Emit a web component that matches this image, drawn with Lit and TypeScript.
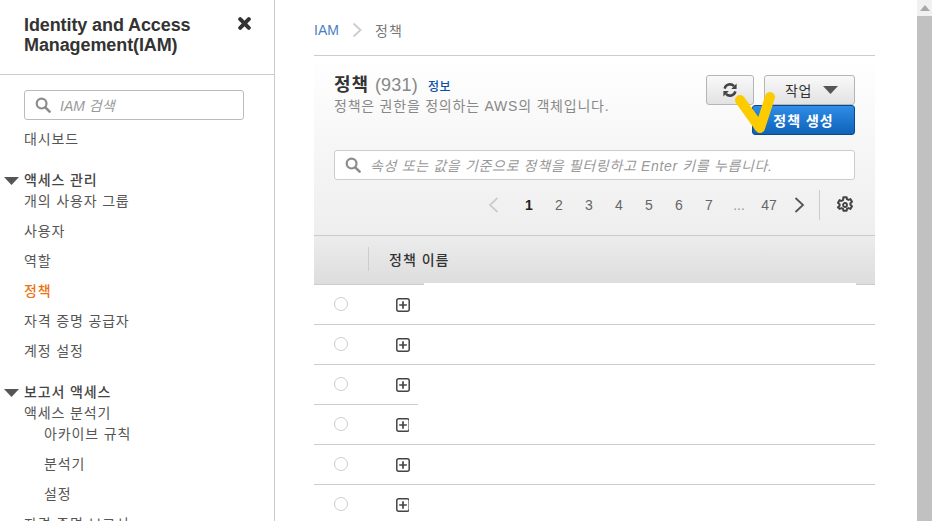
import { LitElement, html, css, svg } from "lit";
import { customElement } from "lit/decorators.js";

const searchIcon = svg`<svg class="mag" width="16" height="16" viewBox="0 0 16 16"><circle cx="6.6" cy="6.6" r="4.9" fill="none" stroke="#8c8c8c" stroke-width="2.2"/><path d="M10.3 10.3 14.6 14.6" stroke="#8c8c8c" stroke-width="2.6" stroke-linecap="round"/></svg>`;
const caret = svg`<svg class="caret" width="15" height="8" viewBox="0 0 15 8"><path d="M0 0H15L7.5 8Z" fill="#555"/></svg>`;
const plus = svg`<svg width="14" height="14" viewBox="0 0 14 14"><rect x=".8" y=".8" width="12.4" height="12.4" rx="2" fill="none" stroke="#444" stroke-width="1.5"/><path d="M3.2 7H10.8M7 3.2V10.8" stroke="#444" stroke-width="1.7"/></svg>`;

@customElement("app-root")
export class AppRoot extends LitElement {
  static styles = css`
    :host { display: block; width: 932px; height: 521px; overflow: hidden; position: relative; background: #fff;
      font-family: "Liberation Sans", "Noto Sans CJK KR", sans-serif; color: #444; font-size: 14px; }
    * { box-sizing: border-box; }
    .page { display: flex; height: 521px; }
    .side { width: 275px; flex: none; border-right: 1px solid #ccc; height: 521px; overflow: hidden; }
    .side-head { height: 75px; border-bottom: 1px solid #ccc; padding: 15px 24px 0; display: flex; justify-content: space-between; }
    .side-title { font-size: 18px; line-height: 20px; font-weight: 700; color: #333; letter-spacing: -0.1px; }
    .close { margin: 2px -1px 0 0; }
    .side-search { margin: 15px 30px 0 24px; height: 30px; border: 1px solid #bbb; border-radius: 3px; display: flex; align-items: center; padding-left: 10px; gap: 9px;
      font-style: italic; color: #999; font-size: 14px; }
    .mag { flex: none; }
    .nav { padding-left: 24px; margin-top: 4px; position: relative; letter-spacing: 0.85px; }
    .item { height: 30px; line-height: 30px; color: #555; white-space: nowrap; }
    .item.sub { padding-left: 20px; }
    .item.on { color: #ec7211; font-weight: 500; }
    .sec { height: 21px; line-height: 21px; margin-top: 16px; font-weight: 500; color: #444; position: relative; white-space: nowrap; }
    .sec .caret { position: absolute; left: -20px; top: 7px; }
    .tight { height: 21px; line-height: 21px; color: #555; white-space: nowrap; }
    .gap { height: 4px; }
    .subs { margin-top: -5px; }
    .main { width: 642px; flex: none; padding: 0 42px 0 39px; position: relative; }
    .crumb { height: 56px; border-bottom: 1px solid #ccc; display: flex; align-items: center; gap: 13px; padding-top: 5px; }
    .crumb .iam { color: #4a7fc1; }
    .crumb .cur { color: #777; letter-spacing: 1.2px; }
    .panel { background: linear-gradient(#fff, #eee); height: 180px; border-bottom: 1px solid #ccc; padding: 19px 20px 0; }
    .top { display: flex; justify-content: space-between; height: 60px; }
    .t1 { display: flex; align-items: baseline; height: 20px; line-height: 20px; }
    .t1 b { font-size: 18px; color: #333; font-weight: 700; letter-spacing: 0.9px; }
    .t1 .n { font-size: 18px; color: #888; margin-left: 6px; letter-spacing: 0.2px; }
    .t1 a { font-size: 12px; color: #0b4fa8; font-weight: 500; margin-left: 10px; letter-spacing: 0.6px; }
    .desc { color: #888; font-size: 14px; line-height: 20px; margin-top: 1px; letter-spacing: 0.77px; }
    .acts { width: 149px; display: flex; flex-wrap: wrap; justify-content: flex-end; column-gap: 10px; align-content: flex-start; }
    .btn { height: 30px; border: 1px solid #b5b5b5; border-radius: 3px; background: linear-gradient(#f9f9f9, #e2e2e2); display: flex; align-items: center; justify-content: center; color: #333; font-size: 14px; }
    .btn.ref { width: 48px; }
    .btn.act { width: 91px; gap: 11px; padding-left: 4px; letter-spacing: 0.7px; }
    .btn.act .caret { display: block; }
    .btn.new { width: 103px; background: linear-gradient(#2f8ce8, #0f62b8); border-color: #0a4a8c; color: #fff; font-weight: 700; letter-spacing: 1px; }
    .search { margin-top: 15px; height: 30px; background: #fff; border: 1px solid #ccc; border-radius: 3px; display: flex; align-items: center; padding-left: 10px; gap: 9px; font-style: italic; color: #999; letter-spacing: 0.66px; }
    .pager { display: flex; align-items: center; justify-content: flex-end; height: 30px; margin-top: 10px; color: #666; }
    .pn { width: 30px; text-align: center; font-size: 14px; }
    .pn.on { color: #222; font-weight: 700; }
    .pn.dots { color: #999; }
    .pdiv { width: 1px; height: 30px; background: #ccc; margin: 0 16px 0 14px; }
    .prev { margin-right: 15px; display: block; }
    .next { display: block; margin-left: 10px; }
    .gear { margin-right: 1px; display: block; }
    .thead { height: 49px; background: linear-gradient(#ececec, #ddd); border-bottom: 1px solid #ccc; display: flex; align-items: center; position: relative; padding-bottom: 2px; }
    .thead .bar { width: 1px; height: 24px; background: #ccc; margin-left: 54px; }
    .thead .nm { margin-left: 20px; color: #333; font-weight: 500; letter-spacing: 1px; }
    .mask { position: absolute; left: 110px; right: 19px; bottom: -1px; height: 2px; background: #fff; }
    .row { height: 40px; display: flex; align-items: center; border-bottom: 1px solid #ccc; padding-top: 1px; position: relative; }
    .row.short { border-bottom: none; padding-bottom: 1px; padding-top: 0; }
    .row.short::after { content: ""; position: absolute; left: 0; bottom: 0; width: 104px; height: 1px; background: #ccc; }
    .radio { width: 14px; height: 14px; border: 1px solid #ccc; border-radius: 50%; margin: -2px 0 0 20px; background: #fff; }
    .plus { margin-left: 48px; display: block; line-height: 0; }
    .plus.clip { clip-path: inset(0 1px 0 0); }
    .rows { height: 236px; overflow: hidden; }
    .scroll { width: 15px; flex: none; background: #f1f1f1; height: 521px; display: flex; flex-direction: column; }
    .up { height: 16px; display: flex; align-items: center; justify-content: center; }
    .thumb { flex: 1; background: #c1c1c1; }
    .mark { position: absolute; left: 730px; top: 85px; pointer-events: none; }
  `;

  private row(clip = false, short = false) {
    return html`<div class="row ${short ? "short" : ""}"><div class="radio"></div><span class="plus ${clip ? "clip" : ""}">${plus}</span></div>`;
  }

  render() {
    return html`
      <div class="page">
        <aside class="side">
          <div class="side-head">
            <div class="side-title">Identity and Access<br />Management(IAM)</div>
            <svg class="close" width="13" height="13" viewBox="0 0 13 13"><path d="M2.2 2.2 10.8 10.8M10.8 2.2 2.2 10.8" stroke="#333" stroke-width="4" stroke-linecap="round"/></svg>
          </div>
          <div class="side-search">${searchIcon}<span>IAM 검색</span></div>
          <div class="nav">
            <div class="item">대시보드</div>
            <div class="sec">${caret}액세스 관리</div>
            <div class="tight">개의 사용자 그룹</div>
            <div class="gap"></div>
            <div class="item">사용자</div>
            <div class="item">역할</div>
            <div class="item on">정책</div>
            <div class="item">자격 증명 공급자</div>
            <div class="item">계정 설정</div>
            <div class="sec">${caret}보고서 액세스</div>
            <div class="tight">액세스 분석기</div>
            <div class="subs">
              <div class="item sub">아카이브 규칙</div>
              <div class="item sub">분석기</div>
              <div class="item sub">설정</div>
            </div>
            <div class="item">자격 증명 보고서</div>
          </div>
        </aside>
        <main class="main">
          <div class="crumb">
            <span class="iam">IAM</span>
            <svg width="10" height="16" viewBox="0 0 10 16"><path d="M1.5 1.5 8.5 8 1.5 14.5" fill="none" stroke="#ccc" stroke-width="1.8"/></svg>
            <span class="cur">정책</span>
          </div>
          <section class="panel">
            <div class="top">
              <div>
                <div class="t1"><b>정책</b><span class="n">(931)</span><a>정보</a></div>
                <div class="desc">정책은 권한을 정의하는 AWS의 객체입니다.</div>
              </div>
              <div class="acts">
                <div class="btn ref">
                  <svg width="16" height="16" viewBox="0 0 16 16"><path d="M2.6 6.6A5.5 5.5 0 0 1 12 4.2M13.4 9.4A5.5 5.5 0 0 1 4 11.8" fill="none" stroke="#444" stroke-width="2.5"/><path d="M14.6 1.6V7H9.2ZM1.4 14.4V9H6.8Z" fill="#444"/></svg>
                </div>
                <div class="btn act"><span>작업</span>${caret}</div>
                <div class="btn new">정책 생성</div>
              </div>
            </div>
            <div class="search">${searchIcon}<span>속성 또는 값을 기준으로 정책을 필터링하고 Enter 키를 누릅니다.</span></div>
            <div class="pager">
              <svg class="prev" width="11" height="16" viewBox="0 0 11 16"><path d="M9.5 1 2 8l7.5 7" fill="none" stroke="#ccc" stroke-width="1.8"/></svg>
              <span class="pn on">1</span><span class="pn">2</span><span class="pn">3</span><span class="pn">4</span><span class="pn">5</span><span class="pn">6</span><span class="pn">7</span><span class="pn dots">...</span><span class="pn">47</span>
              <svg class="next" width="11" height="16" viewBox="0 0 11 16"><path d="M1.5 1 9 8l-7.5 7" fill="none" stroke="#555" stroke-width="1.8"/></svg>
              <span class="pdiv"></span>
              <svg class="gear" width="18" height="18" viewBox="0 0 18 18"><path d="M7.4 1.6h3.2l.4 2 1.5.7 1.9-.8 1.6 2.7-1.6 1.4v1.6l1.6 1.4-1.6 2.7-1.9-.8-1.5.7-.4 2H7.4l-.4-2-1.5-.7-1.9.8L2 11.6l1.6-1.4V8.6L2 7.2l1.6-2.7 1.9.8L7 4.6Z" fill="none" stroke="#444" stroke-width="2" stroke-linejoin="round" transform="translate(0 -.4)"/><circle cx="9" cy="9" r="2" fill="none" stroke="#444" stroke-width="1.8"/></svg>
            </div>
          </section>
          <div class="thead"><span class="bar"></span><span class="nm">정책 이름</span><span class="mask"></span></div>
          <div class="rows">
            ${this.row()}${this.row()}${this.row(false, true)}${this.row(true)}${this.row()}${this.row(true)}
          </div>
        </main>
        <div class="scroll">
          <div class="up"><svg width="10" height="6" viewBox="0 0 10 6"><path d="M0 6 5 0l5 6Z" fill="#a8a8a8"/></svg></div>
          <div class="thumb"></div>
        </div>
      </div>
      <svg class="mark" width="50" height="56" viewBox="0 0 50 56"><path d="M10 15 30 43 40 12" fill="none" stroke="#fccb00" stroke-width="10" stroke-linecap="round" stroke-linejoin="round"/></svg>
    `;
  }
}
